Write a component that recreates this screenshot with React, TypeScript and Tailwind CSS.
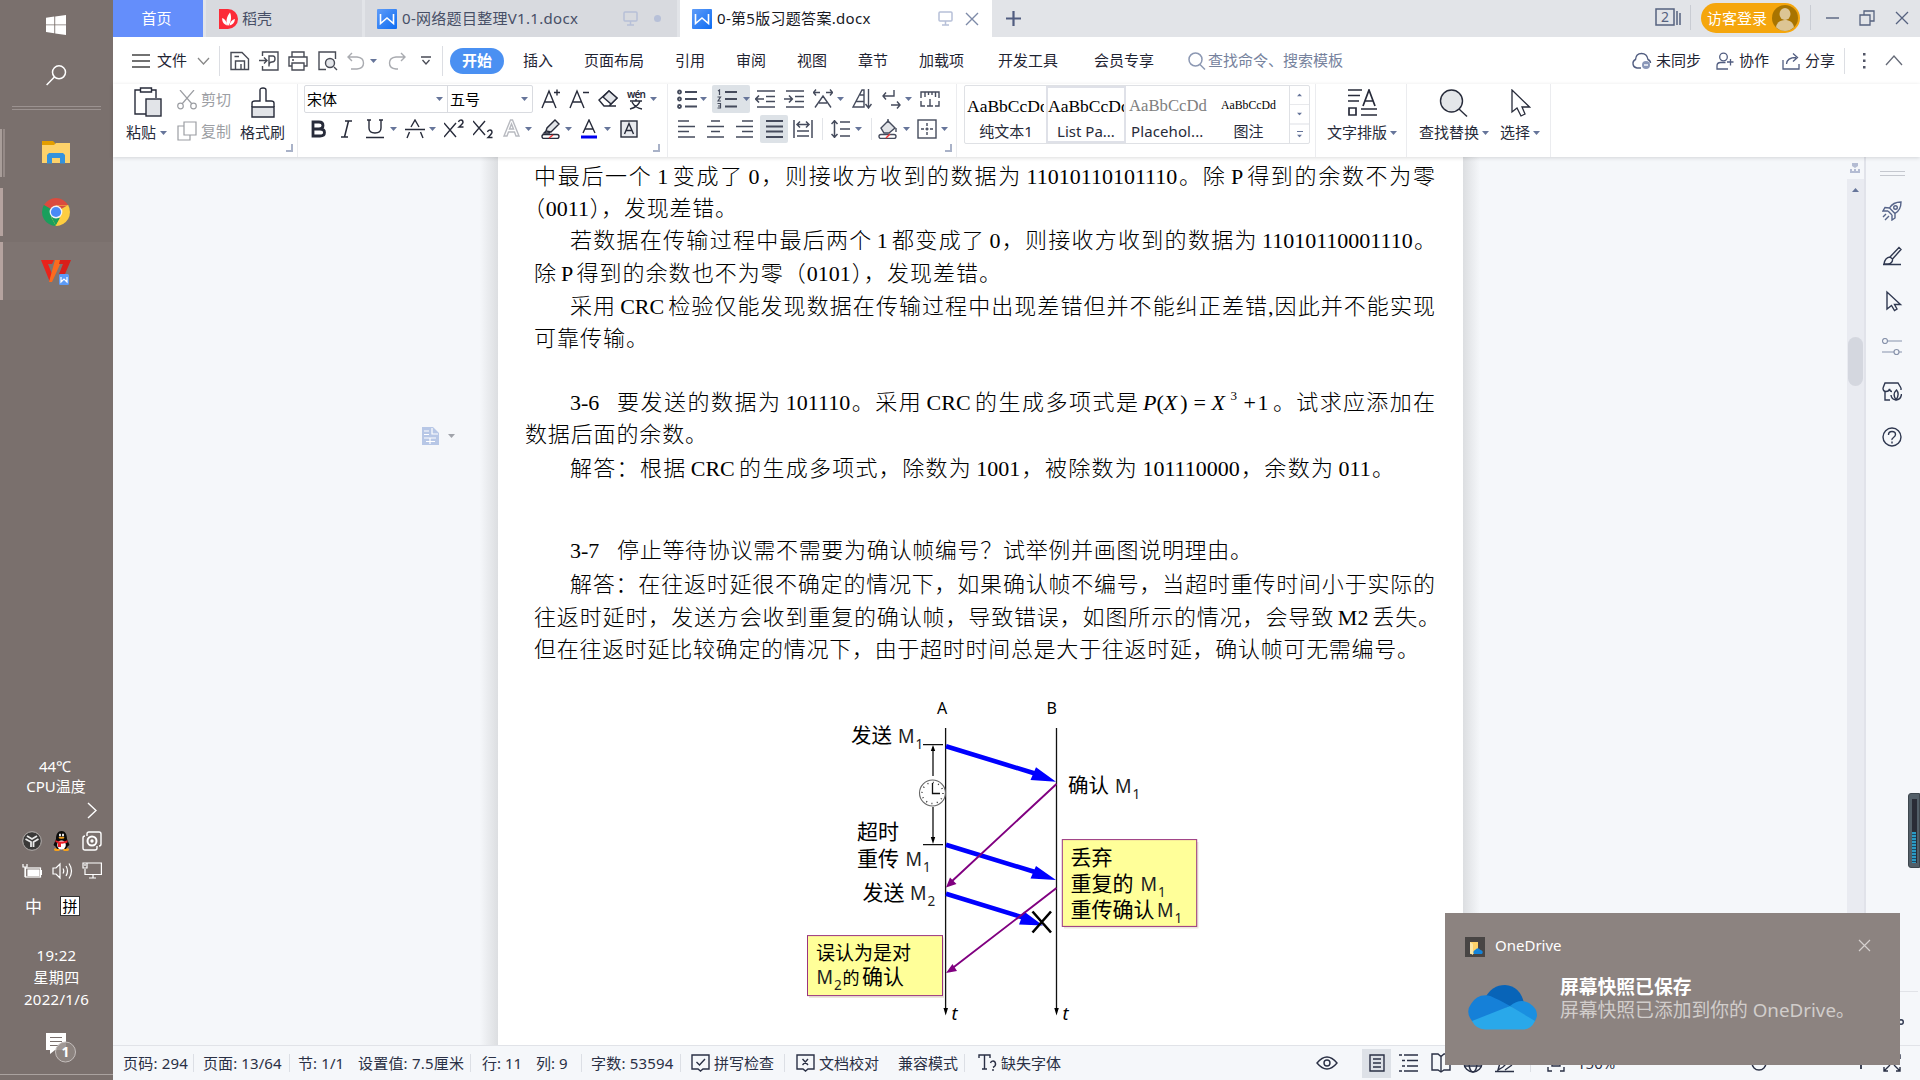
import React from "react";

type P = { children?: React.ReactNode; className?: string };

const Ico = ({ w = 20, h = 20, sw = 1.4, className = "", children }: P & { w?: number; h?: number; sw?: number }) => (
  <svg width={w} height={h} viewBox={`0 0 ${w} ${h}`} fill="none" stroke="currentColor" strokeWidth={sw} className={`shrink-0 ${className}`}>
    {children}
  </svg>
);

const Cell = ({ children, className = "" }: P) => (
  <div className={`flex h-full shrink-0 items-center whitespace-nowrap ${className}`}>{children}</div>
);

const Caret = ({ className = "" }: P) => (
  <svg width="7" height="4" viewBox="0 0 7 4" className={`shrink-0 fill-[#66759a] ${className}`}>
    <path d="M0 0H7L3.5 4Z" />
  </svg>
);

const Line = ({ children, className = "" }: P) => (
  <div className={`h-8 shrink-0 whitespace-nowrap text-justify leading-8 [text-align-last:justify] ${className}`}>{children}</div>
);

const Corner = () => (
  <Ico w={8} h={8} sw={2} className="text-[#a9b2c8]">
    <path d="M7 0V7H1" />
  </Ico>
);

const WDoc = () => (
  <svg width="20" height="20" viewBox="0 0 20 20" className="shrink-0">
    <defs>
      <linearGradient id="wd" x1="0" y1="0" x2="1" y2="1">
        <stop offset="0" stopColor="#5f9cf8" />
        <stop offset="1" stopColor="#0d6cf2" />
      </linearGradient>
    </defs>
    <rect width="20" height="20" rx="1" fill="url(#wd)" />
    <path d="M3.500 5V14.500L10 9L16.500 14.500V5" fill="none" stroke="#fff" strokeWidth="1.600" />
  </svg>
);

const Monitor = () => (
  <Ico w={15} h={15} sw={1.5} className="text-[#b7c0d8]">
    <rect x="1" y="1" width="13" height="9" rx="1" />
    <path d="M7.500 10V14M4 14H11" />
  </Ico>
);

const Sidebar = () => (
  <aside className="flex h-full w-[113px] shrink-0 flex-col bg-[#7a706d] text-[15px] text-white">
    <svg width="20" height="20" viewBox="0 0 20 20" className="mt-[15px] ml-[46px] shrink-0" fill="#fff">
      <path d="M0 2.800L8.300 1.600V9.400H0ZM9.200 1.400L20 0V9.400H9.200ZM0 10.300H8.300V18.200L0 17ZM9.200 10.300H20V20L9.200 18.400Z" />
    </svg>
    <Ico w={21} h={21} sw={1.5} className="mt-[30px] ml-[46px]">
      <circle cx="13" cy="7.300" r="6.500" />
      <path d="M8.400 12L.6 20" />
    </Ico>
    <div className="mt-5 ml-3 h-1 w-[89px] border-y border-[#9b9290]" />
    <div className="mt-[19px] flex h-12 w-full items-center">
      <div className="h-full w-[2px] bg-[#a89d99]" />
      <div className="ml-px h-full w-[2px] bg-[#958a87]" />
      <svg width="28" height="24" viewBox="0 0 28 24" className="mt-[-1px] ml-[37px]">
        <path d="M0 0H11L13 2V6H0Z" fill="#e39e00" />
        <path d="M0 4H12L14 2H28V22H0Z" fill="#fdd26a" />
        <path d="M5 22.500V14L7 12H21L23 14V22.500H18V17H10V22.500Z" fill="#3492dc" />
      </svg>
    </div>
    <div className="mt-[11px] flex h-12 w-full items-center">
      <div className="h-full w-[3px] bg-[#b5a39f]" />
      <svg width="28" height="28" viewBox="0 0 28 28" className="ml-[39px]">
        <path d="M14 14L1.900 7A14 14 0 0 1 26.100 7Z" fill="#db4b3e" />
        <path d="M14 14L26.100 7A14 14 0 0 1 14 28Z" fill="#fdcd41" />
        <path d="M14 14V28A14 14 0 0 1 1.900 7Z" fill="#1a9f5c" />
        <path d="M14 7.500H26.400A14 14 0 0 0 26.100 7H14Z" fill="#fdcd41" />
        <path d="M19.600 17L14 28L9 19Z" fill="#fdcd41" />
        <path d="M8.400 17.200L14 28L18 20Z" fill="#1a9f5c" />
        <path d="M19.600 17.200L13.500 28L22 25Z" fill="#fdcd41" />
        <circle cx="14" cy="14" r="6.400" fill="#f4f4f4" />
        <circle cx="14" cy="14" r="5.100" fill="#4a8af5" />
      </svg>
    </div>
    <div className="mt-[6px] flex h-[58px] w-full items-center bg-[#7e7471]">
      <div className="h-full w-[3px] bg-[#b5a39f]" />
      <svg width="30" height="26" viewBox="0 0 30 26" className="mt-0.5 ml-[38px]">
        <path d="M0 1H13L11 5H7L11 15L8.500 22Z" fill="#e8231b" />
        <path d="M14 1H21L11 23H8Z" fill="#fb6b1e" />
        <path d="M19 1H30L24 15H18L22 5H18Z" fill="#d91f1a" />
        <rect x="18" y="15" width="10" height="11" rx="1.500" fill="#5b9bf8" />
        <path d="M20 18V23L23 20L26 23V18" stroke="#fff" strokeWidth="1.200" fill="none" />
      </svg>
    </div>
    <div className="mt-[456px] pr-[3px] text-center leading-5">44℃</div>
    <div className="pr-[1px] text-center leading-5">CPU温度</div>
    <Ico w={10} h={17} sw={1.4} className="mt-[6px] ml-[87px]">
      <path d="M1 1L9 8.500L1 16" />
    </Ico>
    <div className="mt-[11px] ml-[22px] flex h-[21px] items-center">
      <svg width="20" height="20" viewBox="0 0 20 20">
        <circle cx="10" cy="10" r="9.300" fill="#3a3938" stroke="#b5b0ae" />
        <path d="M3.500 8L9 11V16M5 5L10 8L15 5M16.500 8L11.500 11V16" stroke="#e8e8e8" strokeWidth="1.800" fill="none" />
      </svg>
      <svg width="18" height="20" viewBox="0 0 18 20" className="ml-[11px]">
        <ellipse cx="4" cy="18.500" rx="3" ry="1.500" fill="#f6a11b" />
        <ellipse cx="13" cy="18.500" rx="3" ry="1.500" fill="#f6a11b" />
        <path d="M3 8C3 3 5 0 8.500 0S14 3 14 8L16.500 14L14.500 15.500L13 18H4L2.500 15.500L.5 14Z" fill="#0a0a0a" />
        <ellipse cx="8.500" cy="14" rx="4.300" ry="4.600" fill="#fff" />
        <ellipse cx="7" cy="4" rx="1" ry="1.500" fill="#fff" />
        <ellipse cx="10" cy="4" rx="1" ry="1.500" fill="#fff" />
        <ellipse cx="8.500" cy="6.800" rx="3" ry="1" fill="#f6a11b" />
        <path d="M2.500 9C6 11 11 11 14.500 9V11.500C12 12.500 9 13 8 12.500V16H5V12L2.500 11Z" fill="#e8202a" />
      </svg>
      <Ico w={20} h={20} sw={1.400} className="ml-[11px]">
        <path d="M5 5V3Q5 1 7 1H17Q19 1 19 3V13Q19 15 17 15" />
        <path d="M15 15V17Q15 19 13 19H3Q1 19 1 17V7Q1 5 3 5" />
        <circle cx="10" cy="10" r="4.500" strokeWidth="2" />
        <circle cx="10" cy="10" r="1" fill="#fff" />
      </Ico>
    </div>
    <div className="mt-[10px] ml-[22px] flex h-[19px] items-center">
      <Ico w={20} h={16} sw={1.200}>
        <rect x="3.500" y="5" width="15" height="9" />
        <rect x="6" y="7" width="11" height="5.500" fill="#fff" />
        <path d="M19.500 7V12M1 1V4H5V1M3 4V14" />
      </Ico>
      <Ico w={21} h={18} sw={1.200} className="ml-[10px]">
        <path d="M1 6H4L8 2V16L4 12H1ZM11 6.500Q12.500 9 11 11.500M14 4Q17 9 14 14M17 1.500Q22 9 17 16.500" />
      </Ico>
      <Ico w={20} h={17} sw={1.200} className="ml-[9px]">
        <path d="M5 1H19.400V12.500H3V7M11 12.500V16M7 16H14M1 1H5V6H1ZM3 2V4" />
      </Ico>
    </div>
    <div className="mt-4 ml-[25px] flex h-5 items-center leading-none">
      <span className="w-[35px] text-[17px]">中</span>
      <span className="flex h-5 w-5 items-center justify-center border border-[#333] bg-white text-[15px] text-black">拼</span>
    </div>
    <div className="mt-7 text-center leading-[22px] tracking-[0.3px]">
      <div>19:22</div>
      <div>星期四</div>
      <div>2022/1/6</div>
    </div>
    <svg width="32" height="32" viewBox="0 0 32 32" className="mt-[22px] ml-[46px] shrink-0">
      <path d="M0 1H20V18H9L4 22V18H0Z" fill="#fff" />
      <path d="M4 5.500H16M4 9.500H16M4 13.500H12" stroke="#7a706d" />
      <circle cx="19.500" cy="20" r="10" fill="#8f8683" fillOpacity=".85" stroke="#c4bebc" />
      <text x="19.500" y="25" textAnchor="middle" fontSize="14" fontWeight="700" fill="#fff">1</text>
    </svg>
    <div className="mt-[10px] h-px w-full bg-[#aaa29f]" />
  </aside>
);

const TabBar = () => (
  <div className="flex h-[37px] shrink-0 bg-[#e2e4e8] text-[15px] text-[#474f66]">
    <div className="mr-[3px] flex w-[90px] items-center justify-center bg-[#648efb] pr-[3px] text-white">首页</div>
    <div className="mr-[3px] flex w-[156px] items-center bg-[#d8dadf] pl-[13px]">
      <svg width="19" height="20" viewBox="0 0 19 20" className="mr-[4px]">
        <path d="M0 0H9A10 10 0 0 1 9 20H0Z" fill="#fc2b38" />
        <path d="M9 17C6 13 8 7 11 3.500C13 8 12 14 9 17ZM8 16.500C4 15 3 12 3.200 9C6 10 8 13 8 16.500ZM10.500 16.500C11 13 13 10.500 16 10C15.500 14 13.500 16 10.500 16.500Z" fill="#fff" />
      </svg>
      稻壳
    </div>
    <div className="mr-[3px] flex w-[312px] items-center bg-[#d8dadf] pl-3">
      <WDoc />
      <span className="ml-[5px] w-[221px] whitespace-nowrap tracking-[0.3px]">0-网络题目整理V1.1.docx</span>
      <Monitor />
      <span className="ml-4 h-[7px] w-[7px] rounded-full bg-[#b7c0d8]" />
    </div>
    <div className="flex w-[312px] items-center bg-white pl-3 text-[#16181f]">
      <WDoc />
      <span className="ml-[5px] w-[221px] whitespace-nowrap tracking-[0.3px]">0-第5版习题答案.docx</span>
      <Monitor />
      <Ico w={14} h={14} className="ml-3 text-[#7d8aa8]">
        <path d="M1 1L13 13M13 1L1 13" />
      </Ico>
    </div>
    <div className="flex w-[663px] items-center pl-[14px]">
      <Ico w={15} h={15} sw={2.200} className="text-[#515d80]">
        <path d="M7.500 0V15M0 7.500H15" />
      </Ico>
    </div>
    <Cell className="w-[35px] text-[#56627f]">
      <Ico w={26} h={18} sw={1.500} className="mb-[3px]">
        <rect x="1" y="1" width="18" height="16" />
        <path d="M22 3V17M25 5V17" />
        <text x="10" y="14" textAnchor="middle" fontSize="14" stroke="none" fill="currentColor">2</text>
      </Ico>
    </Cell>
    <div className="mt-[5px] mr-[10px] h-[25px] w-px bg-[#c9ccd3]" />
    <div className="mt-[3px] flex h-[30px] w-[99px] items-center rounded-full bg-[#f5a60d] pl-[6px] text-white">
      <span className="w-[65px]">访客登录</span>
      <svg width="26" height="26" viewBox="0 0 26 26">
        <circle cx="13" cy="13" r="13" fill="#a87400" />
        <ellipse cx="13" cy="9" rx="5.500" ry="6" fill="#dcc594" />
        <path d="M4 22.300C5 12.500 21 12.500 22 22.300A13 13 0 0 1 4 22.300Z" fill="#dcc594" />
      </svg>
    </div>
    <div className="mt-[5px] ml-[10px] h-[25px] w-px bg-[#c9ccd3]" />
    <Cell className="pb-[2px] pl-[15px] text-[#56627f]">
      <Ico w={13} h={16} sw={1.400} className="mr-5"><path d="M0 8H13" /></Ico>
      <Ico w={16} h={16} sw={1.300} className="mr-5"><path d="M1 5H11V15H1ZM5 5V1H15V11H11" /></Ico>
      <Ico w={14} h={14} sw={1.300}><path d="M1 1L13 13M13 1L1 13" /></Ico>
    </Cell>
  </div>
);

const MenuRow = () => (
  <div className="flex h-[47px] shrink-0 items-center bg-white pl-[19px] text-[15px] leading-none text-[#1f2433]">
    <Cell className="w-[25px] text-[#444]"><Ico w={18} h={14}><path d="M0 1H18M0 7H18M0 13H18" /></Ico></Cell>
    <Cell className="w-10">文件</Cell>
    <Cell className="w-[22px] text-[#888]"><Ico w={13} h={8} sw={1.300}><path d="M1 1L6.500 7L12 1" /></Ico></Cell>
    <div className="mr-[10px] h-[30px] w-px shrink-0 bg-[#dcdee3]" />
    <Cell className="w-[29px] text-[#484b55]">
      <Ico w={20} h={20}><path d="M1 18.500V1.500H12L18.500 8V18.500ZM4.500 5.500H9M5.500 18.500V10H14.500V18.500M11 13V18" /></Ico>
    </Cell>
    <Cell className="w-[29px] text-[#484b55]">
      <Ico w={21} h={20}><path d="M3.500 5V1H19V19H3.500V15M0 9.500H8M5 6.500L8 9.500L5 12.500M10 15.500V5H14Q16 5 16 8T13 11Q10 11 10 14" /></Ico>
    </Cell>
    <Cell className="w-[30px] text-[#484b55]">
      <Ico w={20} h={20}><path d="M4 6V1H16V6M4 15H1V6H19V15H16M4 12H16V19H4ZM4 9H6" /></Ico>
    </Cell>
    <Cell className="w-[29px] text-[#484b55]">
      <Ico w={20} h={20}><path d="M8 18.500H1V1H17.500V8M16 16L19 19" /><circle cx="12" cy="12" r="4.500" fill="#e4e6ea" /></Ico>
    </Cell>
    <Cell className="w-[23px] text-[#a9abb0]">
      <Ico w={18} h={18}><path d="M5 1L1 5L5 9M1 5H10Q16.500 5.500 16.500 11T10 17H4" /></Ico>
    </Cell>
    <Cell className="w-[18px]"><Caret /></Cell>
    <Cell className="w-[33px] text-[#a9abb0]">
      <Ico w={18} h={18}><path d="M13 1L17 5L13 9M17 5H8Q1.500 5.500 1.500 11T8 17H10" /></Ico>
    </Cell>
    <Cell className="w-[21px] text-[#484b55]"><Ico w={10} h={9} sw={1.300}><path d="M0 1H10M1.500 4L5 8L8.500 4" /></Ico></Cell>
    <div className="mr-[7px] h-[30px] w-px shrink-0 bg-[#dcdee3]" />
    <div className="mr-[19px] flex h-[26px] w-[54px] shrink-0 items-center justify-center rounded-full bg-[#4a90f2] font-bold text-white">开始</div>
    <Cell className="w-[61px]">插入</Cell>
    <Cell className="w-[91px]">页面布局</Cell>
    <Cell className="w-[61px]">引用</Cell>
    <Cell className="w-[61px]">审阅</Cell>
    <Cell className="w-[61px]">视图</Cell>
    <Cell className="w-[61px]">章节</Cell>
    <Cell className="w-[79px]">加载项</Cell>
    <Cell className="w-24">开发工具</Cell>
    <Cell className="w-[94px]">会员专享</Cell>
    <Cell className="w-5 text-[#8c98b3]"><Ico w={18} h={18} sw={1.500}><circle cx="7.500" cy="7.500" r="6.500" /><path d="M12 12.500L17 17.500" /></Ico></Cell>
    <Cell className="w-[423px] text-[#76829d]">查找命令、搜索模板</Cell>
    <Cell className="w-[25px] text-[#515d80]">
      <Ico w={21} h={18} sw={1.400}>
        <path d="M10 16H6A4.500 4.500 0 0 1 4.500 7.500Q5 1.500 10.500 1.500T17 7.500Q19.500 8.500 19.500 11" />
        <circle cx="15" cy="13" r="4" fill="#8a97b8" stroke="none" /><path d="M13 13H17" stroke="#fff" />
      </Ico>
    </Cell>
    <Cell className="w-[60px]">未同步</Cell>
    <Cell className="w-[23px] text-[#515d80]">
      <Ico w={18} h={18} sw={1.300}><circle cx="7.500" cy="5" r="3.800" /><path d="M12 17H1V14Q1 10.500 4.500 10.500H9.500M11 10H17.500M14.500 7V13.500" /></Ico>
    </Cell>
    <Cell className="w-[43px]">协作</Cell>
    <Cell className="w-[23px] text-[#515d80]">
      <Ico w={18} h={18} sw={1.300}><path d="M1 8V17H17V12M4.500 12Q5 5.500 14 5.500M11 1.500L15.500 5.500L11 9.500" /></Ico>
    </Cell>
    <Cell className="w-[39px]">分享</Cell>
    <div className="mr-[18px] h-[26px] w-px shrink-0 bg-[#dcdee3]" />
    <Ico w={3} h={16} sw={0} className="mr-[19px] text-[#515566]"><path d="M0 0H2.500V2.500H0ZM0 6.500H2.500V9H0ZM0 13H2.500V15.500H0Z" fill="currentColor" /></Ico>
    <Ico w={18} h={11} sw={1.300} className="text-[#666b78]"><path d="M1 10L9 1L17 10" /></Ico>
  </div>
);

const Ribbon = () => (
  <div className="relative z-10 flex h-[73px] shrink-0 bg-white text-[15px] leading-none text-[#272b3a] shadow-[0_1px_4px_rgba(0,0,0,0.14)]">
    {/* clipboard */}
    <div className="flex w-[185px] shrink-0 border-r border-[#ebecef] pl-[13px]">
      <div className="flex w-[51px] flex-col pt-[3px]">
        <Ico w={28} h={30} sw={1.400} className="ml-[8px]">
          <path d="M6 3H1V27H12M18 3H22V11" /><path d="M6.500 1H17.500V5H6.500Z" /><rect x="12" y="12" width="15" height="17" fill="#e2e4e8" />
        </Ico>
        <div className="mt-[8px] flex items-center whitespace-nowrap">粘贴<Caret className="ml-1" /></div>
      </div>
      <div className="flex w-[63px] flex-col text-[#9c9ea3]">
        <div className="flex h-[31px] items-center gap-1">
          <Ico w={20} h={20} sw={1.200}><path d="M3 0L15 14M17 0L5 14" /><circle cx="3.500" cy="16" r="2.800" /><circle cx="16.500" cy="16" r="2.800" /></Ico>剪切
        </div>
        <div className="flex h-8 items-center gap-1">
          <Ico w={20} h={20} sw={1.200}><path d="M7 5H1V19H13V14" /><path d="M7 1H19V14H7Z" /></Ico>复制
        </div>
      </div>
      <div className="flex w-[45px] flex-col pt-[3px]">
        <Ico w={24} h={31} sw={1.400} className="ml-[11px]">
          <path d="M1 20H23V30H1Z" fill="#e2e4e8" /><path d="M1 20V16Q1 14 4 14H9V3Q9 1 12 1T15 3V14H20Q23 14 23 16V20" />
        </Ico>
        <div className="mt-[7px] whitespace-nowrap">格式刷</div>
      </div>
      <div className="flex items-end pb-[5px]"><Corner /></div>
    </div>

    {/* font */}
    <div className="flex w-[370px] shrink-0 border-r border-[#ebecef] pl-[6px]">
      <div className="flex w-[348px] flex-col">
        <div className="flex h-[30px] items-center">
          <div className="flex h-7 w-[229px] shrink-0 rounded-[2px] border border-[#d9dbe0]">
            <div className="flex w-[143px] items-center justify-between border-r border-[#d9dbe0] pr-[4px] pl-[2px] text-black">宋体<Caret /></div>
            <div className="flex flex-1 items-center justify-between pr-[4px] pl-[2px] text-black">五号<Caret /></div>
          </div>
          <Cell className="ml-[8px] w-7"><Ico w={20} h={20}><path d="M1 19L8 2L15 19M3.500 13H12.500M13 3.500H19M16 .5V6.500" /></Ico></Cell>
          <Cell className="w-[29px]"><Ico w={20} h={20}><path d="M1 19L8 2L15 19M3.500 13H12.500M14 3.500H20" /></Ico></Cell>
          <Cell className="w-7"><Ico w={20} h={20}><path d="M1 11L11 2L19 9L11 17H6ZM6 17H18" /><path d="M5 8L11 2L19 9L13 15Z" fill="#e2e4e8" /></Ico></Cell>
          <Cell className="w-6">
            <Ico w={22} h={22}><text x="1" y="10" fontSize="10" fontWeight="600" textLength="19" stroke="none" fill="currentColor">wén</text><path d="M4 13H16M10 11V13M14 13Q12 19 4 21M6 14Q9 20 16 21" /></Ico>
          </Cell>
          <Caret />
        </div>
        <div className="flex h-[30px] items-center pl-[6px]">
          <Cell className="w-[31px]"><Ico w={16} h={18} sw={2.800}><path d="M3 2H9Q13 2 13 5.500T9 9H3ZM3 9H10Q14.500 9 14.500 12.500T10 16H3Z" /></Ico></Cell>
          <Cell className="w-[25px]"><Ico w={11} h={18} sw={1.500}><path d="M4 1H11M0 17H7M7.500 1L3.500 17" /></Ico></Cell>
          <Cell className="w-6"><Ico w={18} h={20}><path d="M3 1V9Q3 14 9 14T15 9V1M1 1H5M13 1H17M0 18.500H18" /></Ico></Cell>
          <Cell className="w-[15px]"><Caret /></Cell>
          <Cell className="w-6"><Ico w={20} h={20}><path d="M6 8L10 1L14 8M0 10.500H20M4.500 13L2 19M15.500 13L18 19" /></Ico></Cell>
          <Cell className="w-[15px]"><Caret /></Cell>
          <Cell className="w-[29px]"><Ico w={20} h={20}><path d="M0 4L12 18M12 4L0 18" /><path d="M14.500 3Q15 1 17 1T19 3.500Q18.500 5 15 8H19.500" /></Ico></Cell>
          <Cell className="w-[30px]"><Ico w={20} h={20}><path d="M0 2L12 16M12 2L0 16" /><path d="M14.500 13Q15 11 17 11T19 13.500Q18.500 15 15 18.500H19.500" /></Ico></Cell>
          <Cell className="w-[22px] text-[#b8bac0]"><Ico w={18} h={20}><path d="M1 17L7.500 1H9.500L16 17H13L11.500 13H5.500L4 17ZM6.500 10L8.500 5L10.500 10Z" /></Ico></Cell>
          <Cell className="w-4"><Caret /></Cell>
          <Cell className="w-6">
            <Ico w={20} h={20}><path d="M14 1L18 5L10 13L5 12L6 9ZM5 12L3 14H9" fill="#e2e4e8" /><rect x="1" y="15.500" width="17" height="4" rx="2" /><path d="M8 19L12 16" stroke="#e33" /></Ico>
          </Cell>
          <Cell className="w-4"><Caret /></Cell>
          <Cell className="w-[23px]"><Ico w={16} h={20}><path d="M2 14L8 1L14 14M4 10H12" /><path d="M0 18H16" stroke="#0000f0" strokeWidth="3" /></Ico></Cell>
          <Cell className="w-4"><Caret /></Cell>
          <Ico w={18} h={18}><rect x="1" y="1" width="16" height="16" fill="#e8eaee" /><path d="M4.500 14L9 3.500L13.500 14M6 10.500H12" /></Ico>
        </div>
      </div>
      <div className="flex items-end pb-[5px]"><Corner /></div>
    </div>

    {/* paragraph */}
    <div className="flex w-[289px] shrink-0 border-r border-[#ebecef] pl-[9px]">
      <div className="flex w-[267px] flex-col text-[#454b5c]">
        <div className="flex h-[30px] items-center">
          <Cell className="w-[23px]"><Ico w={20} h={20} sw={1.800}><path d="M8 3H20M8 10H20M8 17.500H20" /><circle cx="2.500" cy="3" r="1.500" /><circle cx="2.500" cy="10" r="1.500" /><circle cx="2.500" cy="17.500" r="1.500" /></Ico></Cell>
          <Cell className="w-[12px]"><Caret /></Cell>
          <div className="mr-[5px] flex h-7 w-[38px] shrink-0 items-center rounded-[2px] bg-[#dde2e7] pl-[5px]">
            <Ico w={20} h={20} sw={1.800}><path d="M8 3H20M8 10H20M8 17.500H20" /><path d="M1 2L2.500 1V6M.5 8H3.500L1 12H4M.5 14.500H3.500V19H.5M1 17H3.500" strokeWidth="1.200" /></Ico>
            <Caret className="ml-1.5" />
          </div>
          <Cell className="w-[29px]"><Ico w={20} h={20} sw={1.600}><path d="M2 2H20M11 7.500H20M11 12.500H20M2 18H20M0 10H9M4 6.500L.7 10L4 13.500" /></Ico></Cell>
          <Cell className="w-[29px]"><Ico w={20} h={20} sw={1.600}><path d="M2 2H20M11 7.500H20M11 12.500H20M2 18H20M0 10H8M5 6.500L8.300 10L5 13.500" /></Ico></Cell>
          <Cell className="w-6"><Ico w={20} h={20}><path d="M2 18.500L10 7L18 18.500M6 14H14M0 3.500H7M3 .5L.5 3.500L3 6.500M13 3.500H20M17 .5L19.500 3.500L17 6.500" /></Ico></Cell>
          <Cell className="w-[15px]"><Caret /></Cell>
          <Cell className="w-[30px]"><Ico w={20} h={20}><path d="M1 18L10 1H12V18ZM4 12.500H12M8 6H12M16.500 0V18M13.500 15L16.500 19L19.500 15" /></Ico></Cell>
          <Cell className="w-[23px]"><Ico w={19} h={20}><path d="M12 1V7H1M4 3.500L1 7L4 10.500M9 16H18M15 12.500L18 16L15 19.500" /></Ico></Cell>
          <Cell className="w-[15px]"><Caret /></Cell>
          <Ico w={20} h={18}><path d="M1 8V2H19V8M5 2V7M8.500 2V5M12 2V5M15.500 2V7M1 11V16H5M19 11V16H15M10 9V16M7 16H13" /></Ico>
        </div>
        <div className="flex h-[30px] items-center">
          <Cell className="w-[29px]"><Ico w={19} h={18} sw={1.600}><path d="M1 1H12M1 6.500H18M1 11.500H12M1 17H18" /></Ico></Cell>
          <Cell className="w-[29px]"><Ico w={19} h={18} sw={1.600}><path d="M5 1H14M1 6.500H18M5 11.500H14M1 17H18" /></Ico></Cell>
          <Cell className="w-[25px]"><Ico w={19} h={18} sw={1.600}><path d="M7 1H18M1 6.500H18M7 11.500H18M1 17H18" /></Ico></Cell>
          <div className="mr-[5px] flex h-7 w-7 shrink-0 items-center justify-center rounded-[2px] bg-[#dde2e7]"><Ico w={19} h={18} sw={1.800}><path d="M1 1H18M1 6.500H18M1 11.500H18M1 17H18" /></Ico></div>
          <Cell className="w-[29px]"><Ico w={20} h={18} sw={1.500}><path d="M1 0V18M19 0V18M4 4.500H16M7 1.500L4 4.500L7 7.500M13 1.500L16 4.500L13 7.500M4 11H16M4 16H16" /></Ico></Cell>
          <div className="mr-[8px] h-[22px] w-px shrink-0 bg-[#e2e4e8]" />
          <Cell className="w-6"><Ico w={20} h={18} sw={1.500}><path d="M3.500 0V18M.5 4L3.500 .8L6.500 4M.5 14L3.500 17.200L6.500 14M9 2H19M9 9H19M9 16H19" /></Ico></Cell>
          <Cell className="w-4"><Caret /></Cell>
          <div className="mr-[6px] h-[22px] w-px shrink-0 bg-[#e2e4e8]" />
          <Cell className="w-[25px]"><Ico w={20} h={20}><path d="M3 9L10 2L17 9L11 14H6Z" fill="#e2e4e8" /><path d="M10 0V4M18 9V13" /><rect x="1" y="15.500" width="17" height="4" rx="2" /><path d="M8 19L12 15" stroke="#e33" /></Ico></Cell>
          <Cell className="w-[14px]"><Caret /></Cell>
          <Cell className="w-6"><Ico w={20} h={20}><rect x="1" y="1" width="18" height="18" /><path d="M10 4V16M4 10H16" strokeDasharray="3 1.500" /></Ico></Cell>
          <Caret />
        </div>
      </div>
      <div className="flex items-end pb-[5px]"><Corner /></div>
    </div>

    {/* styles */}
    <div className="flex w-[359px] shrink-0 border-r border-[#ebecef] pt-px pl-[7px]">
      <div className="flex h-[59px] w-[346px] rounded-[2px] border border-[#dfe1e5]">
        <div className="w-[81px] overflow-hidden pt-[9px] pl-[2px] text-center">
          <div className="w-[77px] overflow-hidden whitespace-nowrap text-left font-['Liberation_Serif'] text-[17.500px] leading-[22px] text-black">AaBbCcDd</div>
          <div className="mt-[7px] pr-[1px]">纯文本1</div>
        </div>
        <div className="h-[57px] w-[80px] border-2 border-[#dfe1e8] pt-[7px] text-center">
          <div className="w-full overflow-hidden whitespace-nowrap text-left font-['Liberation_Serif'] text-[17.500px] leading-[22px] text-black">AaBbCcDd</div>
          <div className="mt-[7px]">List Pa...</div>
        </div>
        <div className="w-[84px] pt-[9px] pl-[3px]">
          <div className="whitespace-nowrap font-['Liberation_Serif'] text-[16.700px] leading-[22px] text-[#808080]">AaBbCcDd</div>
          <div className="mt-[7px] pl-[2px] whitespace-nowrap tracking-[0.1px]">Placehol...</div>
        </div>
        <div className="w-[79px] pt-[9px] pr-[2px] text-center">
          <div className="font-['Liberation_Serif'] text-[11.800px] leading-[20px] text-black">AaBbCcDd</div>
          <div className="mt-[9px]">图注</div>
        </div>
        <div className="flex flex-1 flex-col border-l border-[#dfe1e5]">
          <div className="flex h-[19px] items-center justify-center border-b border-[#e8e9ec]"><Caret className="rotate-180 scale-75" /></div>
          <div className="flex h-5 items-center justify-center border-b-2 border-[#eeeff2]"><Caret className="scale-75" /></div>
          <div className="flex flex-1 flex-col items-center justify-center gap-[2px]"><div className="h-px w-[6px] bg-[#66759a]" /><Caret className="scale-75" /></div>
        </div>
      </div>
    </div>

    {/* editing */}
    <div className="flex w-[91px] shrink-0 flex-col border-r border-[#ebecef] pt-[5px] pl-[11px]">
      <Ico w={30} h={28} sw={1.700} className="ml-[21px]"><path d="M0 1H14M0 6.500H12M0 12H11M1 19H8V26H1ZM13 20H29M13 26H29" /><path d="M15 17L21 1L27 17M17 12H25" /></Ico>
      <div className="mt-[8px] flex items-center whitespace-nowrap">文字排版<Caret className="ml-[3px]" /></div>
    </div>
    <div className="flex w-[144px] shrink-0 border-r border-[#ebecef] pt-[5px] pl-3">
      <div className="w-[81px]">
        <Ico w={30} h={28} sw={1.400} className="ml-[20px]"><ellipse cx="12.500" cy="12" rx="11" ry="11" fill="#e4e6e9" /><path d="M20 20L28 27.500" /></Ico>
        <div className="mt-[8px] flex items-center whitespace-nowrap">查找替换<Caret className="ml-[3px]" /></div>
      </div>
      <div>
        <Ico w={20} h={28} sw={1.300} className="ml-[11px]"><path d="M1 1V23L6 19L10 27L14 25L11 18H18.500Z" /></Ico>
        <div className="mt-[8px] flex items-center whitespace-nowrap">选择<Caret className="ml-[3px]" /></div>
      </div>
    </div>
  </div>
);

const Diagram = () => {
  const cjk = (x: number, y: number, t: string, s = 20.5) => <text x={x} y={y} fontSize={s} textLength={t.length * s}>{t}</text>;
  const m = (x: number, y: number, n: string) => (
    <>
      <text x={x} y={y} fontSize="19.500" fill="#222" textLength="16.500" lengthAdjust="spacingAndGlyphs">M</text>
      <text x={x + 17.5} y={y + 6} fontSize="13.500" fill="#222">{n}</text>
    </>
  );
  return (
    <svg width="440" height="355" viewBox="0 0 440 355" className="mt-6 ml-[282px] shrink-0">
      <text x="157" y="24" fontSize="16">A</text>
      <text x="266.500" y="24" fontSize="16">B</text>
      <g stroke="#111" strokeWidth="1.300" fill="none">
        <path d="M165.600 38V320M276.500 38V320" />
        <path d="M143 54.700H163M143 154.700H163M153 58V86M153 117V150" />
        <circle cx="152.500" cy="103" r="13" stroke="#666" strokeWidth="1.100" />
        <circle cx="152.500" cy="103" r="10.500" stroke="#333" strokeWidth="1.500" strokeDasharray="1 4.500" />
        <path d="M152.500 93V103.500H160" />
      </g>
      <path d="M163.500 318H168L165.700 325.500ZM274.300 318H278.800L276.500 325.500ZM150.800 61H155.200L153 55ZM150.800 147H155.200L153 154Z" />
      <g stroke="#0000ff" strokeWidth="4.600">
        <path d="M166 56.300L255 83.500M166 154.700L255 182M166 203.700L243 227.500" />
      </g>
      <path d="M256 77.300L250.500 90L276 91.700ZM256 176L250.500 188.500L276 190ZM244 221.500L239 234.500L263 235.500Z" fill="#0000ff" />
      <g stroke="#800080" strokeWidth="1.900">
        <path d="M276.500 94L170 193M276.500 198L170 280" />
      </g>
      <path d="M166 197.500L170 187.500L176.500 194ZM166 283L172.500 274L177 281Z" fill="#800080" />
      <path d="M252.500 221.500L271 242.500M271 221.500L252.500 242.500" stroke="#000" strokeWidth="2.600" />
      <rect x="284" y="152" width="134.500" height="86.500" fill="#ece8dc" />
      <rect x="282.300" y="149.600" width="134.400" height="86.800" fill="#ffff99" stroke="#993380" />
      <rect x="29" y="247.500" width="135" height="60.500" fill="#ece8dc" />
      <rect x="27.500" y="245.600" width="135" height="60" fill="#ffff99" stroke="#993380" />
      {cjk(71, 52.5, "发送")}{m(118, 52.5, "1")}
      {cjk(288, 103, "确认")}{m(335, 103, "1")}
      {cjk(77, 149, "超时", 21)}
      {cjk(77, 176, "重传", 21)}{m(125.5, 176, "1")}
      {cjk(82.5, 209.5, "发送", 21)}{m(130, 210, "2")}
      {cjk(290.5, 175, "丢弃", 21)}
      {cjk(290.5, 201, "重复的", 21)}{m(360.5, 200.5, "1")}
      {cjk(290.5, 227, "重传确认", 21)}{m(377, 227, "1")}
      {cjk(36, 269.5, "误认为是对", 19)}
      {m(36.5, 294, "2")}{cjk(62.5, 293.5, "的", 17)}{cjk(82, 293.5, "确认", 21)}
      <text x="171.500" y="330" fontSize="18" fontStyle="italic">t</text>
      <text x="282.500" y="330" fontSize="18" fontStyle="italic">t</text>
    </svg>
  );
};

const Page = () => (
  <div className="flex h-full w-[965px] shrink-0 flex-col overflow-hidden bg-white pt-[4px] font-['Liberation_Serif','Noto_Sans_CJK_SC',serif] text-[22px] font-light text-black [word-spacing:-2.5px]">
    <Line className="ml-[36px] w-[901px]">中最后一个 1 变成了 0，则接收方收到的数据为 11010110101110。除 P 得到的余数不为零</Line>
    <Line className="ml-[25px] w-[214px]">（0011），发现差错。</Line>
    <Line className="ml-[72px] w-[866px]">若数据在传输过程中最后两个 1 都变成了 0，则接收方收到的数据为 11010110001110。</Line>
    <Line className="mt-px ml-[36px] w-[467px]">除 P 得到的余数也不为零（0101），发现差错。</Line>
    <Line className="mt-px ml-[72px] w-[865px]">采用 CRC 检验仅能发现数据在传输过程中出现差错但并不能纠正差错,因此并不能实现</Line>
    <Line className="ml-[36px] w-[114px]">可靠传输。</Line>
    <div className="mt-8 ml-[72px] flex h-8 shrink-0 items-center whitespace-nowrap leading-8">
      <span className="w-[47px]">3-6</span>
      <Line className="w-[521px]">要发送的数据为 101110。采用 CRC 的生成多项式是</Line>
      <span className="ml-[5px] flex h-8 w-[130px] shrink-0">
        <i>P</i>(<i className="pr-[3px]">X</i>)
        <span className="w-[24px] pl-[6px]">=</span>
        <i className="w-[19px]">X</i>
        <span className="w-[13px] text-[13px] leading-[18px]">3</span>
        <span className="w-[14px]">+</span>1
      </span>
      <Line className="w-[162px]">。试求应添加在</Line>
    </div>
    <Line className="ml-[27px] w-[182px]">数据后面的余数。</Line>
    <Line className="mt-[2px] ml-[72px] w-[824px]">解答：根据 CRC 的生成多项式，除数为 1001，被除数为 101110000，余数为 011。</Line>
    <div className="mt-[50px] ml-[72px] flex h-8 shrink-0 whitespace-nowrap leading-8">
      <span className="w-[47px]">3-7</span>
      <Line className="w-[635px]">停止等待协议需不需要为确认帧编号？试举例并画图说明理由。</Line>
    </div>
    <Line className="mt-[2px] ml-[72px] w-[865px]">解答：在往返时延很不确定的情况下，如果确认帧不编号，当超时重传时间小于实际的</Line>
    <Line className="mt-px ml-[36px] w-[906px]">往返时延时，发送方会收到重复的确认帧，导致错误，如图所示的情况，会导致 M2 丢失。</Line>
    <Line className="ml-[36px] w-[885px]">但在往返时延比较确定的情况下，由于超时时间总是大于往返时延，确认帧可无需编号。</Line>
    <div className="flex font-['Noto_Sans','Noto_Sans_CJK_SC',sans-serif] font-normal"><Diagram /></div>
  </div>
);

const SidePanel = () => (
  <div className="flex w-[54px] shrink-0 flex-col items-center bg-[#f5f7fa] pr-[2px] text-[#2f3850]">
    <div className="mt-[14px] h-[5px] w-[25px] border-y border-[#c5c8cf]" />
    <Ico w={20} h={20} className="mt-[25px] text-[#566489]">
      <path d="M19 1Q11 1 7.500 7L13 12.500Q19 9 19 1ZM7.500 7L3 6.500L1 10L6 10M13 12.500V17L10 19V14M6 10L10 14M1 16L4 13M3 19L7 15" /><circle cx="13.500" cy="6.500" r="1.800" />
    </Ico>
    <Ico w={20} h={20} className="mt-[25px]"><path d="M1 18.500H19M8 11L17 1.500L19 3.500L10.500 13M8 11Q3 11.500 2 18H6Q11 17 10.500 13Z" /></Ico>
    <Ico w={20} h={22} className="mt-[24px] ml-1"><path d="M3 2V19L7.500 15.500L10.500 20.500L13 19L10.500 14.500H16.500Z" /></Ico>
    <Ico w={20} h={18} sw={1.200} className="mt-[26px] text-[#8893ab]"><circle cx="3" cy="3" r="2.500" /><path d="M5.500 3H20M0 14H12M17 14H20" /><circle cx="14.500" cy="14" r="2.500" /></Ico>
    <Ico w={20} h={20} className="mt-[26px]"><path d="M3 9V18H8M1 6L3 1H16L19 6M1 6Q1 9.500 4 9.500T7.500 7Q8 9.500 10 9.500M19 6V8M14 18Q10 12 14.500 8Q18 12 14 18ZM14 18Q9.500 17.500 9 13M14 18Q19 17.500 19.500 12" /></Ico>
    <Ico w={20} h={20} className="mt-[25px]"><circle cx="10" cy="10" r="9" /><path d="M6.500 8Q6.500 4.500 10 4.500T13.500 7.500Q13.500 9 11.500 10.500T10 13M10 14.500V16.500" /></Ico>
    <div className="mt-[346px] mr-[-2px] flex h-[75px] w-3 shrink-0 self-end rounded-l-[3px] border border-[#3d464d] bg-[#535f68] pt-[5px] pl-[3px]">
      <div className="flex h-[64px] w-[5px] flex-col justify-end bg-[#2a2c36]">
        <div className="h-[31px] w-[4px] bg-[repeating-linear-gradient(#2b9ac4_0_2px,#1c4a66_2px_3px)]" />
      </div>
    </div>
    <div className="mt-[123px] h-px w-full bg-[#e1e3e8]" />
    <Ico w={8} h={8} className="mt-[26px] ml-[18px]"><circle cx="4" cy="4" r="2.300" /></Ico>
  </div>
);

const Sep = ({ className = "" }: P) => <div className={`h-[18px] w-px shrink-0 bg-[#dcdfe5] ${className}`} />;

const StatusBar = () => (
  <div className="flex h-[35px] shrink-0 items-center border-t border-[#e1e3e8] bg-[#f5f7fa] pl-[10px] text-[15px] leading-none text-[#2a3045]">
    <Cell className="w-[70px] tracking-[0.2px]">页码: 294</Cell><Sep />
    <Cell className="w-[95px] pl-[9px] tracking-[0.1px]">页面: 13/64</Cell><Sep />
    <Cell className="w-[68px] pl-[8px] tracking-[0.1px]">节: 1/1</Cell>
    <Cell className="w-[112px] tracking-[0.2px]">设置值: 7.5厘米</Cell><Sep />
    <Cell className="w-[65px] pl-[11px]">行: 11</Cell>
    <Cell className="w-[45px]">列: 9</Cell><Sep />
    <Cell className="w-[98px] pl-[9px] tracking-[0.2px]">字数: 53594</Cell><Sep />
    <Cell className="w-[103px] gap-[4px] pl-[10px]"><Ico w={19} h={18}><path d="M1 1H18V15H12L9.500 17L7 15H1ZM5.500 8L8.500 11L14 5" /></Ico>拼写检查</Cell><Sep />
    <Cell className="w-[113px] gap-[4px] pl-[11px]"><Ico w={19} h={18}><path d="M1 1H18V15H12L9.500 17L7 15H1ZM6.500 5L12 11M12 5L6.500 11" /></Ico>文档校对</Cell>
    <Cell className="w-[66px]">兼容模式</Cell><Sep />
    <Cell className="w-[351px] gap-[4px] pl-[13px]">
      <Ico w={19} h={18}><path d="M1 4V1H12V4M6.500 1V15M4 15H9" /><path d="M12.500 9Q13 7 15 7T17.500 9.500T15 13.500M15 15V17" /></Ico>缺失字体
    </Cell>
    <Cell className="w-[46px]">
      <Ico w={22} h={16}><path d="M1 8Q11-4 21 8Q11 20 1 8Z" /><circle cx="11" cy="8" r="3" /></Ico>
    </Cell>
    <div className="mr-[8px] flex h-[29px] w-[29px] shrink-0 items-center justify-center bg-[#dde1e7]"><Ico w={16} h={18}><path d="M1 1H15V17H1ZM4 5H12M4 9H12M4 13H12" /></Ico></div>
    <Cell className="w-8"><Ico w={19} h={18}><path d="M5 1H19M8 6.500H19M8 12H19M5 17H19M0 1H3M3 6.500H6M3 12H6M0 17H3" /></Ico></Cell>
    <Cell className="w-8"><Ico w={20} h={20}><path d="M1 1H7L10 3.500L13 1H19V17H13L10 19L7 17H1ZM10 3.500V19" /></Ico></Cell>
    <Cell className="w-8"><Ico w={20} h={20}><circle cx="10" cy="10" r="9" /><ellipse cx="10" cy="10" rx="4" ry="9" /><path d="M1 7H19M1 13H19" /></Ico></Cell>
    <Cell className="w-[35px]"><Ico w={20} h={20}><path d="M0 18.500H19M3 17L5 10L14 2L17 5L8 14ZM10 17L17 12" /></Ico></Cell><Sep />
    <Cell className="w-[46px] pl-[16px]"><Ico w={18} h={18}><path d="M1 5V1H5M13 1H17V5M1 13V17H5M17 13V17H13M5 6H13V12H5Z" /></Ico></Cell>
    <Cell className="w-[174px]">150%</Cell>
    <Cell className="w-[104px]"><Ico w={16} h={16}><circle cx="8" cy="8" r="7" /></Ico></Cell>
    <Cell className="w-[28px]"><Ico w={12} h={12} sw={1.800}><path d="M6 0V12M0 6H12" /></Ico></Cell>
    <Ico w={18} h={18}><path d="M1 5V1H5M13 1H17V5M1 13V17H5M17 13V17H13M1 1L7 7M17 1L11 7M1 17L7 11M17 17L11 11" /></Ico>
  </div>
);

const Toast = () => (
  <div className="absolute top-[913px] left-[1445px] z-20 flex h-[152px] w-[455px] flex-col bg-[#8c8380] text-white">
    <div className="mt-6 ml-5 flex h-5 items-center">
      <svg width="20" height="20" viewBox="0 0 20 20">
        <rect width="20" height="20" fill="#484544" />
        <path d="M5 5H13V17H5Z" fill="#fdd26a" /><path d="M5 5L8 7V18L5 16Z" fill="#fbe7a8" />
        <path d="M9 17A2.500 2.500 0 0 1 10 13Q13 9.500 15.500 13A2.300 2.300 0 0 1 17 17Z" fill="#1283da" />
      </svg>
      <span className="mb-1 ml-[10px] w-[363px] text-[15px] leading-5">OneDrive</span>
      <Ico w={13} h={13} sw={1.200} className="mb-1 text-[#d5d0ce]"><path d="M1 1L12 12M12 1L1 12" /></Ico>
    </div>
    <div className="mt-[17px] ml-[23px] flex">
      <svg width="70" height="52" viewBox="0 0 70 52" className="mt-[9px] shrink-0">
        <path d="M17 15Q24 2 37 2Q52 3 56 20L40 26Z" fill="#0864b8" />
        <path d="M4 38Q-3 29 3 21Q9 11 20 12.500Q24 13 42 23L6 40Z" fill="#1580d8" />
        <path d="M42 23Q52 15 61 20Q73 28 67 38L66 39Z" fill="#1a8fe0" />
        <path d="M4 38L42 23L67 38Q63 46.500 55 46.500H17Q8 46 4 38Z" fill="#29a8ea" />
      </svg>
      <div className="mt-px ml-[22px] whitespace-nowrap text-[18.800px]">
        <div className="leading-6 font-bold">屏幕快照已保存</div>
        <div className="leading-[23px] text-[#d1cdcb]">屏幕快照已添加到你的 OneDrive。</div>
      </div>
    </div>
  </div>
);

export default function App() {
  return (
    <div className="relative flex h-[1080px] w-[1920px] overflow-hidden bg-[#f5f7fa] font-['Noto_Sans','Noto_Sans_CJK_SC',sans-serif]">
      <Sidebar />
      <main className="flex min-w-0 flex-1 flex-col">
        <TabBar />
        <MenuRow />
        <Ribbon />
        <div className="flex h-[888px] shrink-0 overflow-hidden">
          <div className="flex w-[385px] shrink-0 justify-end">
            <div className="mt-[269px] mr-[25px] flex h-[19px] items-center gap-[9px]">
              <svg width="17" height="18" viewBox="0 0 17 18">
                <path d="M0 0H11L17 6V18H0Z" fill="#b7c7e6" />
                <path d="M2 4H7M2 7.500H7M2 11H14M10 1V7H16M4 14.500H13M8 11V17" stroke="#fff" strokeWidth="1.200" fill="none" />
              </svg>
              <Caret className="fill-[#a0a3aa]" />
            </div>
            <div className="w-[18px] bg-gradient-to-l from-[#dcdee1] to-[#f5f7fa]" />
          </div>
          <Page />
          <div className="w-[17px] shrink-0 bg-gradient-to-r from-[#dcdee1] to-[#f5f7fa]" />
          <div className="flex-1" />
          <div className="flex w-[17px] shrink-0 flex-col items-center bg-[#e9ebf1]">
            <div className="flex h-[22px] w-full items-center justify-center bg-[#f5f7fa] pr-[1px]">
              <svg width="10" height="10" viewBox="0 0 10 10" fill="#b4bcd3"><path d="M2 0H8V3L5 5L2 3ZM0 6H2V8H4V6H6V8H8V6H10V10H0Z" /></svg>
            </div>
            <Caret className="mt-[9px] rotate-180" />
            <div className="mt-[145px] h-[49px] w-[15px] rounded-full bg-[#d4d7df]" />
          </div>
          <div className="w-[2px] shrink-0 bg-[#e1e3ea]" />
          <SidePanel />
        </div>
        <StatusBar />
      </main>
      <Toast />
    </div>
  );
}
